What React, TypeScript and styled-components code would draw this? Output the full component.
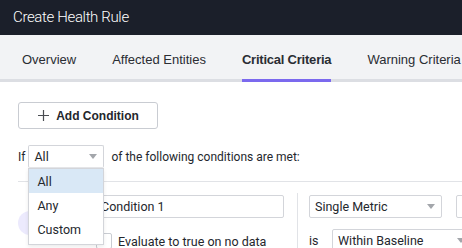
import React from "react";
import styled, { createGlobalStyle } from "styled-components";

const Global = createGlobalStyle`
  html, body { margin: 0; padding: 0; background: #fff; }
  body { font-family: Roboto, "Liberation Sans", Arial, sans-serif; color: #24272d; overflow: hidden; }
  * { box-sizing: border-box; }
`;

const Page = styled.div`
  width: 462px;
  height: 248px;
  overflow: hidden;
  display: flex;
  flex-direction: column;
`;

const Header = styled.div`
  height: 35px;
  background: #1b1f2a;
  display: flex;
  align-items: center;
  padding-left: 13px;
  flex-shrink: 0;
`;

const Title = styled.div`
  color: #fff;
  font-family: Roboto, "Liberation Sans", sans-serif;
  font-weight: 300;
  font-size: 15px;
  letter-spacing: -0.35px;
  margin-top: -2px;
`;

const TabBar = styled.div`
  height: 47px;
  background: #f2f3f5;
  border-bottom: 3px solid #dcdee3;
  display: flex;
  align-items: stretch;
  padding-left: 22px;
  gap: 36px;
  flex-shrink: 0;
  white-space: nowrap;
`;

const Tab = styled.div<{ $active?: boolean }>`
  display: flex;
  align-items: center;
  font-family: "Liberation Sans", Arial, sans-serif;
  font-size: 13px;
  letter-spacing: ${(p) => (p.$active ? "-0.22px" : "0px")};
  font-weight: ${(p) => (p.$active ? 700 : 400)};
  color: #2a2d33;
  margin-bottom: -3px;
  border-bottom: 3px solid ${(p) => (p.$active ? "#7b69ee" : "transparent")};
  padding-top: 5px;
`;

const Content = styled.div`
  padding: 20px 0 0 18px;
  display: flex;
  flex-direction: column;
`;

const AddButton = styled.button`
  width: 140px;
  height: 27px;
  border: 1px solid #c9ccd2;
  border-radius: 3px;
  background: #fff;
  display: flex;
  align-items: center;
  justify-content: center;
  gap: 7px;
  font-family: "Liberation Sans", Arial, sans-serif;
  font-weight: 700;
  font-size: 12px;
  color: #24272d;
  padding: 0 0 0 1px;
`;

const IfRow = styled.div`
  margin-top: 16px;
  height: 23px;
  display: flex;
  align-items: center;
  font-size: 12px;
  white-space: nowrap;
`;

const SelectWrap = styled.div`
  position: relative;
  margin-left: 3px;
  margin-right: 7px;
`;

const Select = styled.div<{ $w: number; $open?: boolean }>`
  width: ${(p) => p.$w}px;
  height: 23px;
  border: 1px solid #d3d5da;
  border-bottom-color: ${(p) => (p.$open ? "#e6e7ea" : "#d3d5da")};
  border-radius: 2px;
  background: #fff;
  display: flex;
  align-items: center;
  justify-content: space-between;
  padding: 0 6px 0 5px;
  font-size: 12.5px;
  color: #24272d;
  white-space: nowrap;
  flex-shrink: 0;
`;

const Caret = styled.span`
  width: 0;
  height: 0;
  border-left: 4.5px solid transparent;
  border-right: 4.5px solid transparent;
  border-top: 5px solid #a3a6ab;
  margin-left: 8px;
`;

const Menu = styled.div`
  position: absolute;
  top: 100%;
  left: 0;
  width: 76px;
  background: #fff;
  border: 1px solid #d3d5da;
  box-shadow: 0 2px 4px rgba(0, 0, 0, 0.08);
  z-index: 10;
  padding-bottom: 3px;
`;

const MenuItem = styled.div<{ $active?: boolean }>`
  height: 24px;
  display: flex;
  align-items: center;
  padding-left: 8px;
  font-size: 12.5px;
  background: ${(p) => (p.$active ? "#d9e8f6" : "#fff")};
  color: #24272d;
`;

const Card = styled.div`
  margin-top: 13px;
  border-top: 1px solid #e1e3e7;
  padding-top: 13px;
  display: flex;
  align-items: flex-start;
`;

const LeftCol = styled.div`
  width: 74px;
  padding-top: 16px;
  flex-shrink: 0;
`;

const Badge = styled.div`
  width: 24px;
  height: 24px;
  border-radius: 50%;
  background: #eceafd;
`;

const MidCol = styled.div`
  width: 192px;
  display: flex;
  flex-direction: column;
  gap: 15px;
  flex-shrink: 0;
`;

const TextInput = styled.div`
  height: 23px;
  border: 1px solid #d3d5da;
  border-radius: 2px;
  display: flex;
  align-items: center;
  padding-left: 8px;
  font-size: 12.5px;
`;

const CheckRow = styled.div`
  display: flex;
  align-items: center;
  gap: 6px;
  padding-left: 4px;
  font-size: 12.5px;
  white-space: nowrap;
`;

const Checkbox = styled.span`
  width: 16px;
  height: 16px;
  border: 1px solid #c9ccd2;
  border-radius: 2px;
  background: #fff;
  flex-shrink: 0;
`;

const Divider = styled.div`
  width: 1px;
  align-self: stretch;
  height: 80px;
  background: #e1e3e7;
  margin: -2px 11px 0 13px;
  flex-shrink: 0;
`;

const RightCol = styled.div`
  display: flex;
  flex-direction: column;
  gap: 11px;
  flex-shrink: 0;
`;

const RightRow = styled.div`
  display: flex;
  align-items: center;
  gap: 14px;
  font-size: 12.5px;
  white-space: nowrap;
`;

const IsLabel = styled.span`
  width: 9px;
`;

const PlusIcon = () => (
  <svg width="11" height="11" viewBox="0 0 11 11">
    <path d="M5.5 0V11M0 5.5H11" stroke="#4a4d52" strokeWidth="1.2" fill="none" />
  </svg>
);

export default function App() {
  return (
    <Page>
      <Global />
      <Header>
        <Title>Create Health Rule</Title>
      </Header>
      <TabBar>
        <Tab>Overview</Tab>
        <Tab>Affected Entities</Tab>
        <Tab $active>Critical Criteria</Tab>
        <Tab>Warning Criteria</Tab>
      </TabBar>
      <Content>
        <AddButton>
          <PlusIcon />
          Add Condition
        </AddButton>
        <IfRow>
          If
          <SelectWrap>
            <Select $w={76} $open>
              All
              <Caret />
            </Select>
            <Menu>
              <MenuItem $active>All</MenuItem>
              <MenuItem>Any</MenuItem>
              <MenuItem>Custom</MenuItem>
            </Menu>
          </SelectWrap>
          of the following conditions are met:
        </IfRow>
        <Card>
          <LeftCol>
            <Badge />
          </LeftCol>
          <MidCol>
            <TextInput>Condition 1</TextInput>
            <CheckRow>
              <Checkbox />
              Evaluate to true on no data
            </CheckRow>
          </MidCol>
          <Divider />
          <RightCol>
            <RightRow>
              <Select $w={133}>
                Single Metric
                <Caret />
              </Select>
              <Select $w={120}>Value</Select>
            </RightRow>
            <RightRow>
              <IsLabel>is</IsLabel>
              <Select $w={140}>
                Within Baseline
                <Caret />
              </Select>
            </RightRow>
          </RightCol>
        </Card>
      </Content>
    </Page>
  );
}
